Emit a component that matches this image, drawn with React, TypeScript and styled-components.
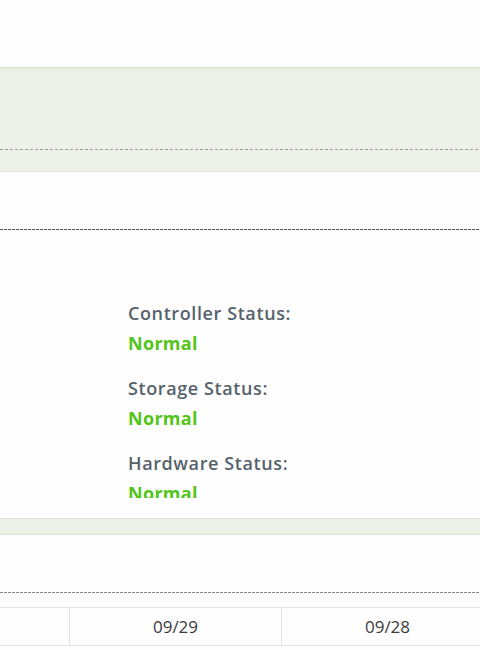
import styled, { createGlobalStyle } from "styled-components";

const GlobalStyle = createGlobalStyle`
  html, body {
    margin: 0;
    padding: 0;
    background: #fefefe;
    overflow: hidden;
  }
  body {
    font-family: "Open Sans", "Noto Sans", sans-serif;
  }
`;

const statuses = [
  { label: "Controller Status:", value: "Normal" },
  { label: "Storage Status:", value: "Normal" },
  { label: "Hardware Status:", value: "Normal" },
];

const dates = ["", "09/29", "09/28"];

export default function App() {
  return (
    <Pagina>
      <GlobalStyle />
      <Topo />
      <Faixa>
        <FaixaConteudo />
        <LinhaPontilhada />
        <FaixaRodape />
      </Faixa>
      <Painel>
        <PainelCabecalho />
        <ListaStatus>
          {statuses.map((item) => (
            <ItemStatus key={item.label}>
              <Rotulo>{item.label}</Rotulo>
              <Valor>{item.value}</Valor>
            </ItemStatus>
          ))}
        </ListaStatus>
      </Painel>
      <FaixaFina />
      <Secao />
      <Tabela>
        {dates.map((d, i) => (
          <Celula key={i}>{d}</Celula>
        ))}
      </Tabela>
    </Pagina>
  );
}

const Pagina = styled.div`
  width: 480px;
  height: 650px;
  display: flex;
  flex-direction: column;
  overflow: hidden;
`;

const Topo = styled.div`
  height: 67px;
  flex-shrink: 0;
  background: #fefefe;
`;

const Faixa = styled.div`
  flex-shrink: 0;
  border-top: 1px solid #dbe0d3;
  border-bottom: 1px solid #e2e3e0;
  background: linear-gradient(#e4e9dc 0px, #eef1e8 4px, #eef1e8 100%);
`;

const FaixaConteudo = styled.div`
  height: 81px;
`;

const LinhaPontilhada = styled.div`
  height: 1px;
  background-image: linear-gradient(to right, #9c9f97 0 3px, transparent 3px 5px);
  background-size: 5px 1px;
`;

const FaixaRodape = styled.div`
  height: 21px;
`;

const Painel = styled.div`
  height: 346px;
  flex-shrink: 0;
  background: #fefefe;
  display: flex;
  flex-direction: column;
`;

const PainelCabecalho = styled.div`
  height: 58px;
  flex-shrink: 0;
  border-bottom: 1px solid transparent;
  background-image: linear-gradient(to right, #4d5256 0 3px, transparent 3px 4px);
  background-size: 4px 1px;
  background-repeat: repeat-x;
  background-position: 0 100%;
`;

const ListaStatus = styled.div`
  margin-top: 70px;
  padding-left: 128px;
  display: flex;
  flex-direction: column;
  gap: 21px;
  height: 197px;
  overflow: hidden;
`;

const ItemStatus = styled.div`
  display: flex;
  flex-direction: column;
  gap: 6px;
`;

const Rotulo = styled.span`
  font-size: 18px;
  font-weight: 600;
  line-height: 24px;
  color: #56626b;
  letter-spacing: 0.6px;
`;

const Valor = styled.span`
  font-size: 18px;
  font-weight: 700;
  line-height: 24px;
  color: #52c41a;
  letter-spacing: 0.3px;
`;

const FaixaFina = styled.div`
  height: 15px;
  flex-shrink: 0;
  border-top: 1px solid #dfe0dc;
  border-bottom: 1px solid #dfe0dc;
  background: #eef1e8;
`;

const Secao = styled.div`
  height: 58px;
  flex-shrink: 0;
  margin-bottom: 13px;
  border-bottom: 1px solid transparent;
  background-image: linear-gradient(to right, #85888b 0 3px, transparent 3px 4px);
  background-size: 4px 1px;
  background-repeat: repeat-x;
  background-position: 0 100%;
`;

const Tabela = styled.div`
  display: grid;
  grid-template-columns: 70px 212px 212px;
  border-top: 1px solid #e3e3e3;
  border-bottom: 1px solid #e3e3e3;
  flex-shrink: 0;
`;

const Celula = styled.div`
  height: 37px;
  display: flex;
  align-items: center;
  justify-content: center;
  border-right: 1px solid #e3e3e3;
  font-family: "Open Sans", "Noto Sans", sans-serif;
  font-size: 17px;
  color: #3a3a3a;
`;
